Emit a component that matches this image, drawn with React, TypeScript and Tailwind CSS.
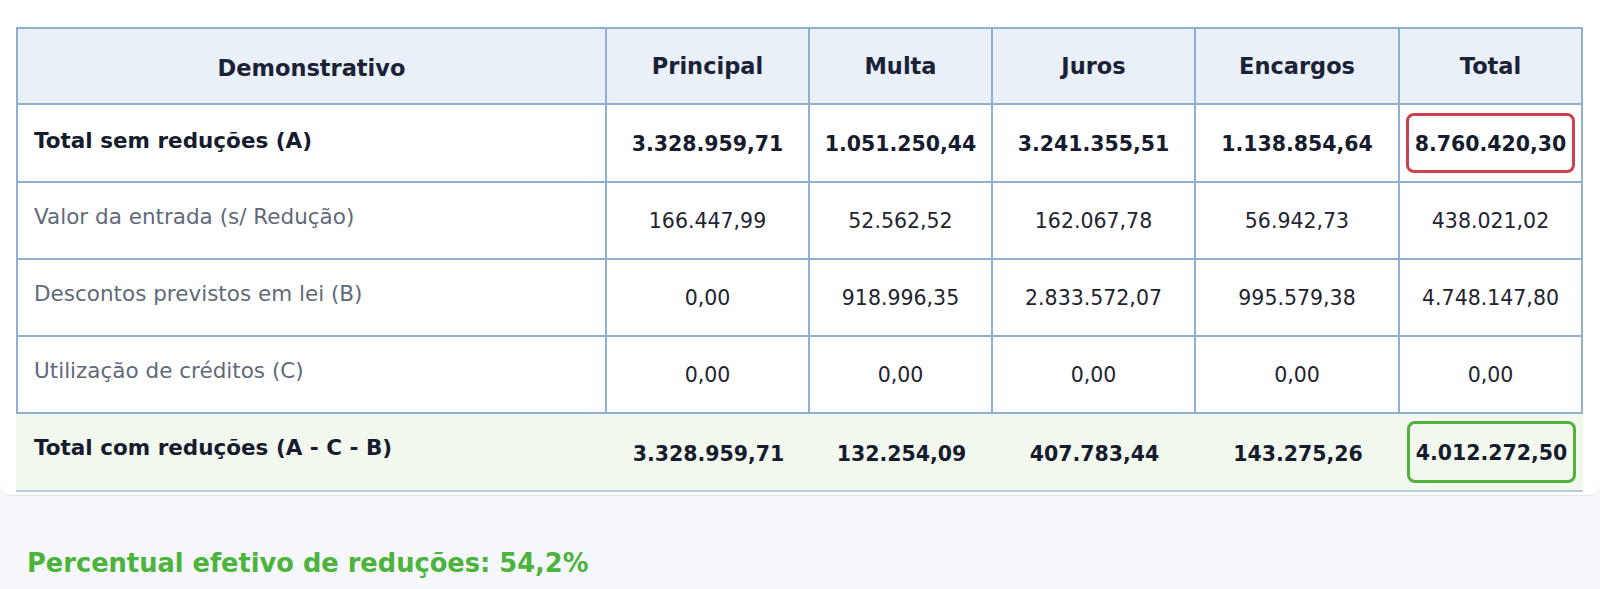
import React from 'react';

interface Row {
	label: string;
	values: string[];
	strong?: boolean;
	height: string;
}

const columns = ['Principal', 'Multa', 'Juros', 'Encargos', 'Total'];

const rows: Row[] = [
	{
		label: 'Total sem reduções (A)',
		values: ['3.328.959,71', '1.051.250,44', '3.241.355,51', '1.138.854,64', '8.760.420,30'],
		strong: true,
		height: 'h-[78px]'
	},
	{
		label: 'Valor da entrada (s/ Redução)',
		values: ['166.447,99', '52.562,52', '162.067,78', '56.942,73', '438.021,02'],
		height: 'h-[77px]'
	},
	{
		label: 'Descontos previstos em lei (B)',
		values: ['0,00', '918.996,35', '2.833.572,07', '995.579,38', '4.748.147,80'],
		height: 'h-[77px]'
	},
	{
		label: 'Utilização de créditos (C)',
		values: ['0,00', '0,00', '0,00', '0,00', '0,00'],
		height: 'h-[77px]'
	}
];

const finalRow = {
	label: 'Total com reduções (A - C - B)',
	values: ['3.328.959,71', '132.254,09', '407.783,44', '143.275,26', '4.012.272,50']
};

const font = { fontFamily: '"DejaVu Sans", Verdana, sans-serif' };

const HighlightBox = ({ value, tone }: { value: string; tone: 'red' | 'green' }) => (
	<div
		className={
			tone === 'red'
				? 'mb-[3px] flex h-[60px] w-[169px] items-center justify-center rounded-lg border-[3px] border-[#c8434f] pt-[3px]'
				: 'flex h-[62px] w-[169px] items-center justify-center rounded-lg border-[3px] border-[#4fb23a] pt-[3px]'
		}
	>
		{value}
	</div>
);

const grid = 'grid grid-cols-[591px_203px_183px_203px_204px_183px]';

export default function App() {
	return (
		<div className="min-h-screen bg-[#f5f7fa] text-[#161c2e]" style={font}>
			<div className="rounded-b-xl border-b border-[#e2e7ee] bg-white pt-[27px] pb-[3px] pl-4">
				<div className="w-[1567px]">
					{/* header */}
					<div className={`${grid} h-[78px] bg-[#e9f0f7] text-[22.5px] font-bold text-[#1b2238]`}>
						<div className="flex items-center justify-center border-2 border-[#8fb0d2] pt-[6px]">
							Demonstrativo
						</div>
						{columns.map((c) => (
							<div
								key={c}
								className="flex items-center justify-center border-y-2 border-r-2 border-[#8fb0d2] pt-0.5"
							>
								{c}
							</div>
						))}
					</div>

					{rows.map((r) => (
						<div key={r.label} className={`${grid} ${r.height}`}>
							<div
								className={
									r.strong
										? 'flex items-center border-x-2 border-b-2 border-[#8fb0d2] pb-[4px] pl-4 text-[21.5px] font-bold text-[#161c2e]'
										: 'flex items-center border-x-2 border-b-2 border-[#8fb0d2] pb-[7px] pl-4 text-[21.5px] text-[#5f6a79]'
								}
							>
								{r.label}
							</div>
							{r.values.map((v, i) => (
								<div
									key={i}
									className={
										r.strong
											? 'flex items-center justify-center border-r-2 border-b-2 border-[#8fb0d2] pt-[3px] text-[20.5px] font-bold text-[#161c2e]'
											: 'flex items-center justify-center border-r-2 border-b-2 border-[#8fb0d2] pt-[2px] text-[20.5px] text-[#1f2430]'
									}
								>
									{r.strong && i === 4 ? <HighlightBox value={v} tone="red" /> : v}
								</div>
							))}
						</div>
					))}

					<div className={`${grid} h-[78px] border-b-2 border-[#b8cce2] bg-[#f3f8ef] font-bold text-[#161c2e]`}>
						<div className="flex items-center pb-[7px] pl-[18px] text-[21.5px]">{finalRow.label}</div>
						{finalRow.values.map((v, i) => (
							<div
								key={i}
								className={
									i === 4
										? 'flex items-center justify-center text-[20.5px]'
										: 'flex items-center justify-center pt-[4px] text-[20.5px]'
								}
							>
								{i === 4 ? <HighlightBox value={v} tone="green" /> : v}
							</div>
						))}
					</div>
				</div>
			</div>
			<p className="pt-[48px] pl-[27px] text-[25.7px] font-bold text-[#4cb33c]">
				Percentual efetivo de reduções: 54,2%
			</p>
		</div>
	);
}
